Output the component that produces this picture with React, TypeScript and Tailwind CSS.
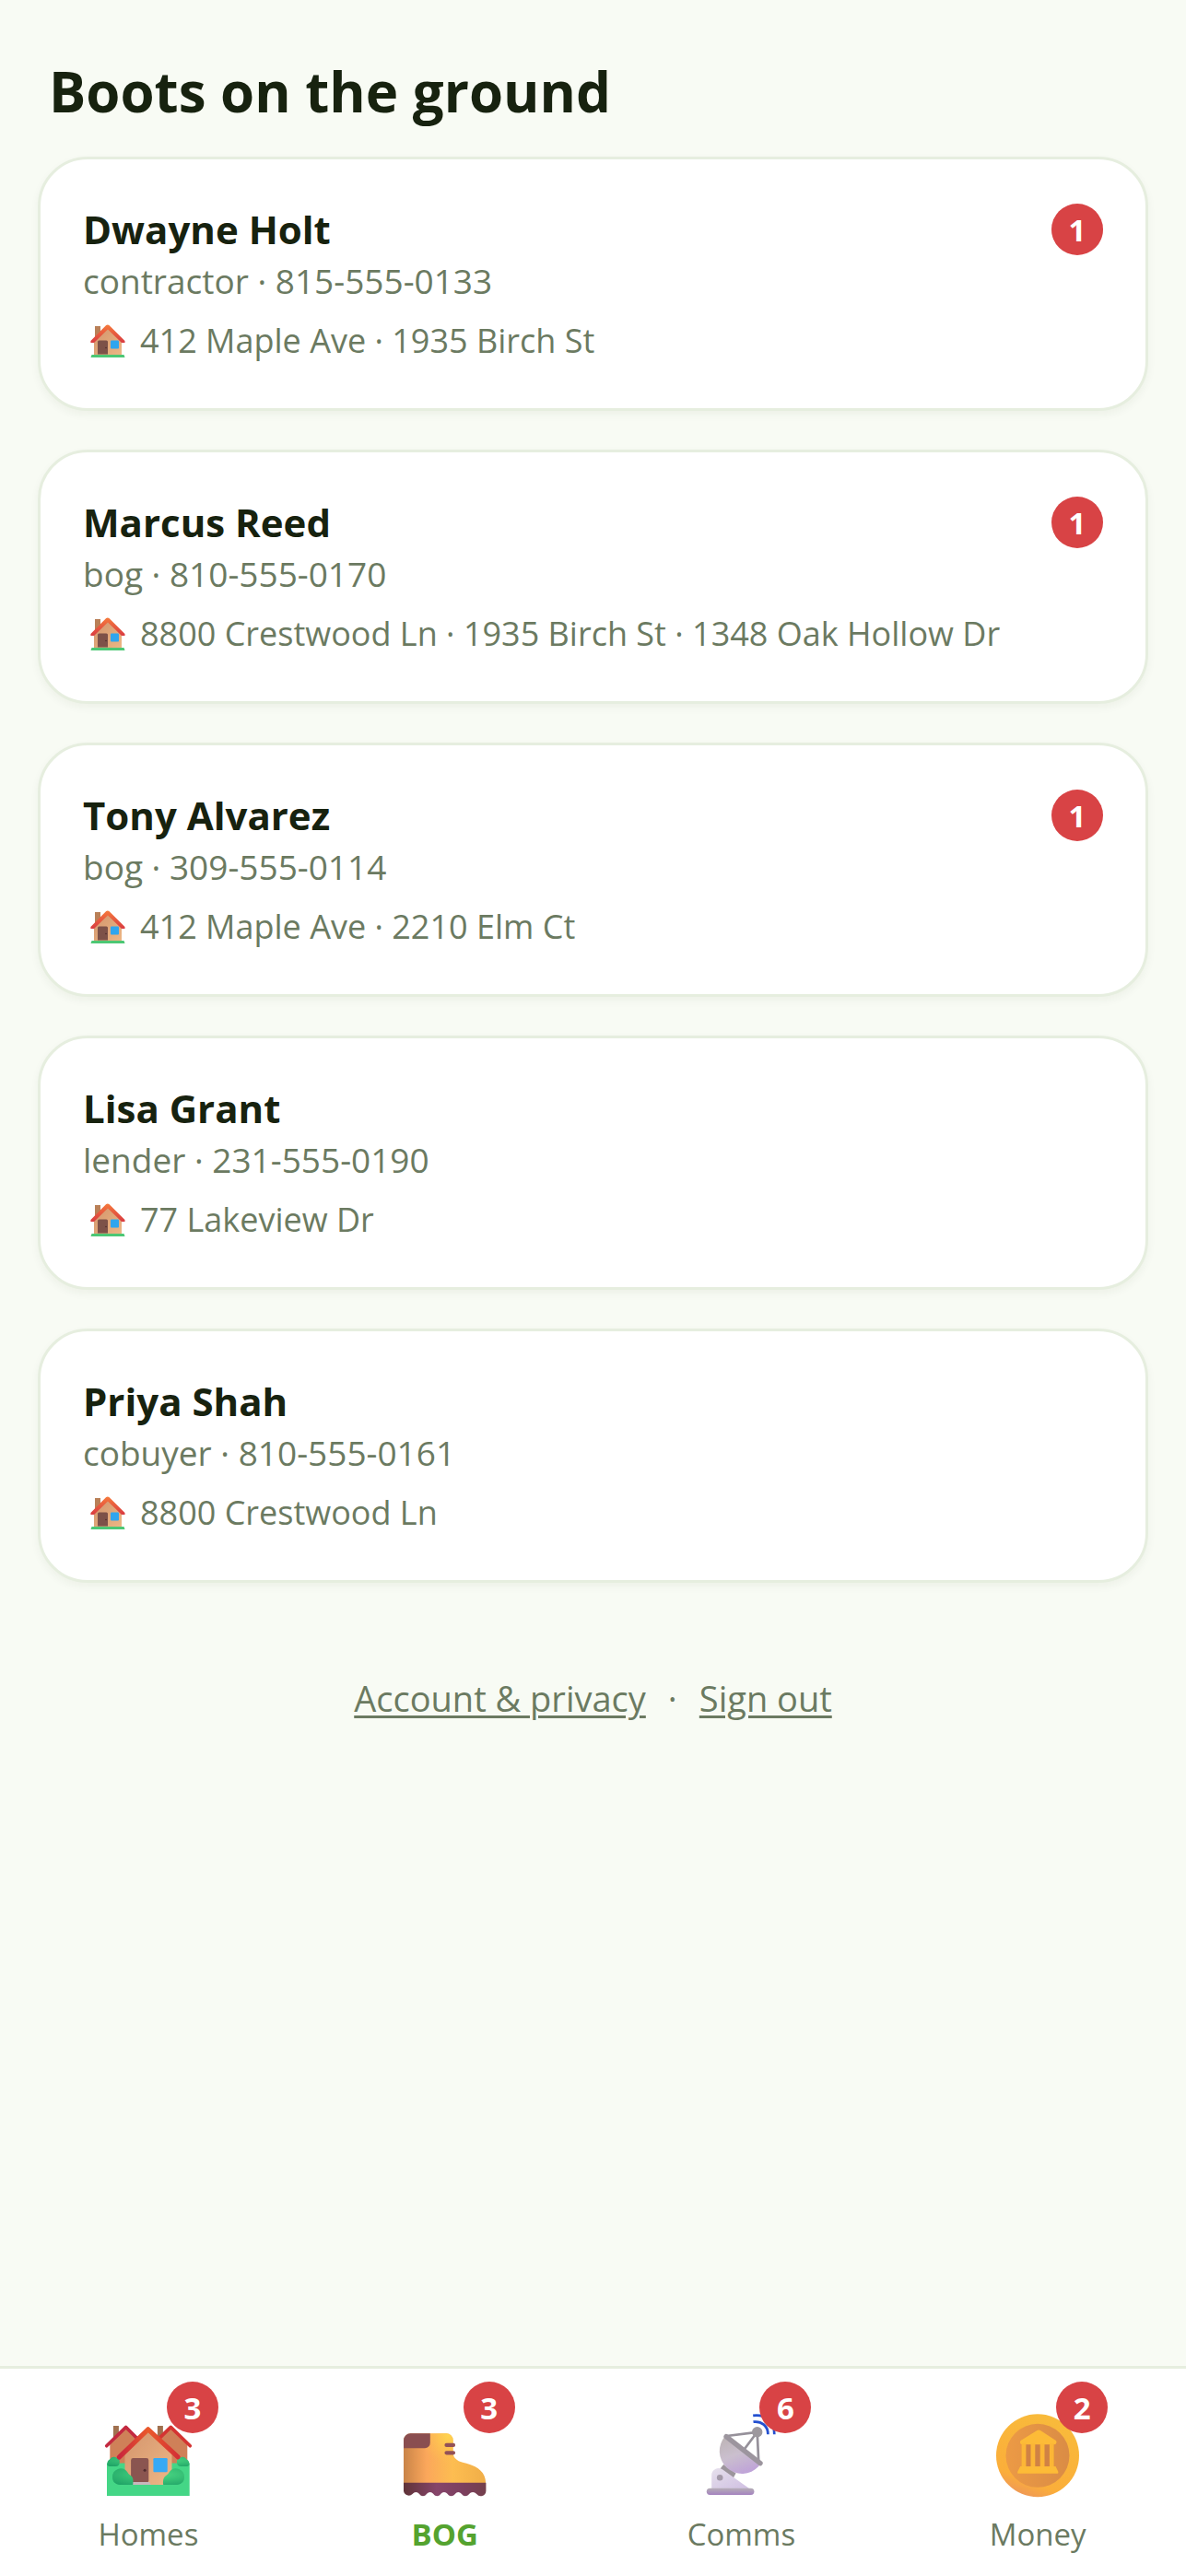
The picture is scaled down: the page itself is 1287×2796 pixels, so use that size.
type Contact = {
  name: string;
  role: string;
  phone: string;
  homes: string[];
  unread: number;
};

const contacts: Contact[] = [
  { name: 'Dwayne Holt', role: 'contractor', phone: '815-555-0133', homes: ['412 Maple Ave', '1935 Birch St'], unread: 1 },
  { name: 'Marcus Reed', role: 'bog', phone: '810-555-0170', homes: ['8800 Crestwood Ln', '1935 Birch St', '1348 Oak Hollow Dr'], unread: 1 },
  { name: 'Tony Alvarez', role: 'bog', phone: '309-555-0114', homes: ['412 Maple Ave', '2210 Elm Ct'], unread: 1 },
  { name: 'Lisa Grant', role: 'lender', phone: '231-555-0190', homes: ['77 Lakeview Dr'], unread: 0 },
  { name: 'Priya Shah', role: 'cobuyer', phone: '810-555-0161', homes: ['8800 Crestwood Ln'], unread: 0 },
];

const HouseIcon = () => (
  <svg viewBox="0 0 38 36" className="w-[38px] h-9 shrink-0" aria-hidden="true">
    <defs>
      <linearGradient id="house-wall" x1="0" y1="0" x2="1" y2="1">
        <stop offset="0" stopColor="#d1946c" />
        <stop offset="1" stopColor="#edb684" />
      </linearGradient>
      <linearGradient id="house-roof" x1="0" y1="0" x2="0" y2="1">
        <stop offset="0" stopColor="#f57a3c" />
        <stop offset="1" stopColor="#d93b41" />
      </linearGradient>
    </defs>
    <path d="M5 2h6v14H5z" fill="#b98058" />
    <path d="M4 17 19 3l15 14v16H4z" fill="url(#house-wall)" />
    <path d="M17.2 1.1a2.4 2.4 0 0 1 3.2 0L37.5 18v2H34L19 5.600 4 20H.4v-2z" fill="url(#house-roof)" />
    <path d="M8 19a1.500 1.500 0 0 1 1.500-1.500h8A1.500 1.500 0 0 1 19 19v13.500H8z" fill="#7d5148" />
    <circle cx="17" cy="25.500" r=".8" fill="#4c2b2b" />
    <rect x="22" y="17.500" width="9" height="9" rx="1" fill="#2fa5ee" />
    <path d="M1.500 33h35l1 3H.5z" fill="#4cc774" />
  </svg>
);

const HomesIcon = () => (
  <svg viewBox="0 0 32 32" className="size-24" aria-hidden="true">
    <defs>
      <linearGradient id="homes-wall" x1="0" y1="0" x2="1" y2="1">
        <stop offset="0" stopColor="#d3946c" />
        <stop offset="1" stopColor="#eeb786" />
      </linearGradient>
      <linearGradient id="homes-roof" x1="0" y1="0" x2="1" y2="0">
        <stop offset="0" stopColor="#c9253c" />
        <stop offset=".5" stopColor="#ea5a2b" />
        <stop offset="1" stopColor="#d42f35" />
      </linearGradient>
      <radialGradient id="homes-bush" cx=".6" cy=".35" r=".8">
        <stop offset="0" stopColor="#4fdd86" />
        <stop offset="1" stopColor="#1fa366" />
      </radialGradient>
    </defs>
    <path d="M3.300 5.300h2V11h-2zM19.300 5.300h2V11h-2z" fill="#a0714f" />
    <path d="M2.100 11.500 7.900 6l6 6v8H2.100zM30.100 11.500 24.100 6l-6 6v8h12z" fill="#cf8058" />
    <path d="M.9 12.600 7.900 5.800l5 5" fill="none" stroke="#c32940" strokeWidth="1.200" strokeLinecap="round" strokeLinejoin="round" />
    <path d="m19.500 10.300 4.600-4.500 7 6.800" fill="none" stroke="#d43432" strokeWidth="1.200" strokeLinecap="round" strokeLinejoin="round" />
    <path d="M1 18.800h29.900v11.900H1z" fill="#44d686" />
    <path d="M1.100 19.300a2 2 0 0 1 1-1.900 1.700 1.700 0 0 1 2.700-.3c.7.200.8.800.8 1.200 0 1.100-.5 1.700-1.400 1.700H2.300c-.7 0-1.200-.3-1.200-.7zM30.800 19.300a2 2 0 0 0-1-1.900 1.700 1.700 0 0 0-2.700-.3c-.7.200-.8.800-.8 1.200 0 1.100.5 1.700 1.400 1.700h1.900c.7 0 1.200-.3 1.200-.7z" fill="url(#homes-bush)" />
    <path d="M7.500 15 15.900 7l8.600 8v11.700h-17z" fill="url(#homes-wall)" />
    <path d="M5.400 16.700 15.900 6.600l10.800 10" fill="none" stroke="url(#homes-roof)" strokeWidth="1.700" strokeLinecap="round" strokeLinejoin="round" />
    <rect x="9.700" y="17" width="6.400" height="9" rx=".8" fill="#8a5550" />
    <circle cx="14.700" cy="21.400" r=".5" fill="#4f2b2e" />
    <path d="M9.300 25.700h7.100l.5 1H9z" fill="#c9b7bd" />
    <rect x="17.800" y="17" width="5.100" height="5.100" rx=".4" fill="#37a9f4" />
    <path d="M3 23.900a3 3 0 0 1 5.300-2c.4.700.7 1 1.300 1.400 1 .6 1 1.900.8 3.400H6.500C4.300 26.700 3 25.800 3 23.900zM29 23.900a3 3 0 0 0-5.300-2c-.4.700-.7 1-1.300 1.400-1 .6-1.200 1.900-1 3.400h4.100c2.200 0 3.500-.9 3.500-2.800z" fill="url(#homes-bush)" />
  </svg>
);

const BootIcon = () => (
  <svg viewBox="0 0 32 32" className="size-24" aria-hidden="true">
    <defs>
      <linearGradient id="boot-leather" x1="0" y1="0" x2="1" y2="0">
        <stop offset="0" stopColor="#c98448" />
        <stop offset=".28" stopColor="#fba75b" />
        <stop offset=".6" stopColor="#fdbd51" />
        <stop offset="1" stopColor="#f0ae48" />
      </linearGradient>
      <radialGradient id="boot-shine" cx="17" cy="9" r="10" gradientUnits="userSpaceOnUse">
        <stop offset="0" stopColor="#ffd34f" />
        <stop offset="1" stopColor="#ffc04f" stopOpacity="0" />
      </radialGradient>
      <linearGradient id="boot-sole" x1="0" y1="0" x2="1" y2="0">
        <stop offset="0" stopColor="#5f3338" />
        <stop offset=".4" stopColor="#86456a" />
        <stop offset=".7" stopColor="#7d4060" />
        <stop offset="1" stopColor="#74404c" />
      </linearGradient>
    </defs>
    <path d="M1 10.600a2.500 2.500 0 0 1 2.500-2.500h13a2.400 2.400 0 0 1 2.400 2.400v4.700c0 1.600 1.300 2.900 3.500 3.400 4.500 1 8.300 3 8.300 7.400H1z" fill="url(#boot-leather)" />
    <path d="M1 10.600a2.500 2.500 0 0 1 2.500-2.500h13a2.400 2.400 0 0 1 2.400 2.400v4.700c0 1.600 1.300 2.900 3.500 3.400 4.500 1 8.300 3 8.300 7.400H1z" fill="url(#boot-shine)" />
    <path d="M1 10.600a2.500 2.500 0 0 1 2.500-2.500h7.100v3.400a1.900 1.900 0 0 1-1.900 1.900H1z" fill="#8a4e50" />
    <path d="M16.500 12.300h2.500M16.500 15.100h2.500" stroke="#925158" strokeWidth="1.400" strokeLinecap="round" />
    <path d="M1 25.900h29.800v3a1.900 1.900 0 0 1-3.400 1.100c-.8-.9-2-.9-2.700 0-.8 1-2 1-2.700 0-.8-.9-1.700-.9-2.400 0-.8 1-2 1-2.700 0-.7-.9-1.800-.9-2.500 0-.7 1-1.900 1-2.600 0-.7-.9-1.700-.9-2.500 0-.7 1-1.900 1-2.600 0-.7-.9-1.800-.9-2.500 0A1.900 1.900 0 0 1 1 28.900z" fill="url(#boot-sole)" />
  </svg>
);

const DishIcon = () => (
  <svg viewBox="0 0 32 32" className="size-24" aria-hidden="true">
    <defs>
      <linearGradient id="dish-bowl" x1=".2" y1="0" x2=".6" y2="1">
        <stop offset="0" stopColor="#bdb4b6" />
        <stop offset=".5" stopColor="#cabfce" />
        <stop offset="1" stopColor="#bfa3d8" />
      </linearGradient>
      <linearGradient id="dish-stand" x1="0" y1="0" x2="1" y2="1">
        <stop offset="0" stopColor="#e6e0ec" />
        <stop offset="1" stopColor="#cfbfe2" />
      </linearGradient>
      <linearGradient id="dish-foot" x1="0" y1="0" x2="0" y2="1">
        <stop offset="0" stopColor="#b5aeb6" />
        <stop offset="1" stopColor="#a583c0" />
      </linearGradient>
    </defs>
    <path d="M20.500 3.900c3-.4 5.300 1.500 5.300 4.500M20.400 1.600c4.500-.6 7.700 2.200 7.700 6.800" fill="none" stroke="#2450d0" strokeWidth=".9" />
    <path d="m9.700 19.300 4.500 3.200-1.200 2.200-5-3.200z" fill="#9c959c" />
    <path d="M5.400 28v-4.800a2.500 2.500 0 0 1 3.900-2.100L19 28z" fill="url(#dish-stand)" />
    <circle cx="8.400" cy="24.100" r="1.100" fill="#a49aa9" />
    <rect x="3.600" y="27.900" width="17.200" height="2.400" rx="1.200" fill="url(#dish-foot)" />
    <path d="M10.400 9a8.100 8.100 0 0 0 12 11l.7-1z" fill="url(#dish-bowl)" />
    <path d="m21.900 7.600-11 1.400M21.900 7.600l-4.500 6M21.900 7.600l.5 10.600" stroke="#96919a" strokeWidth=".9" />
    <path d="M10.700 9.200 23 18.900" stroke="#9c959e" strokeWidth="1.800" strokeLinecap="round" />
    <circle cx="21.900" cy="7.600" r="1.900" fill="#9d989e" />
  </svg>
);

const CoinIcon = () => (
  <svg viewBox="0 0 32 32" className="size-24" aria-hidden="true">
    <defs>
      <linearGradient id="coin-rim" x1=".7" y1="0" x2=".3" y2="1">
        <stop offset="0" stopColor="#f8bb3b" />
        <stop offset=".8" stopColor="#fbae3a" />
        <stop offset="1" stopColor="#ee965a" />
      </linearGradient>
      <linearGradient id="coin-face" x1="0" y1="0" x2="1" y2="0">
        <stop offset="0" stopColor="#ec9a45" />
        <stop offset="1" stopColor="#da8c45" />
      </linearGradient>
    </defs>
    <circle cx="16" cy="16.100" r="15" fill="url(#coin-rim)" />
    <circle cx="16" cy="16.100" r="11.500" fill="url(#coin-face)" />
    <path d="M11 11.500h11v9H11z" fill="#d08244" />
    <path d="M15.800 7a1.100 1.100 0 0 1 1.200 0l5.500 3.600c.6.400.3 1.500-.4 1.500H10.400c-.7 0-1-1.100-.4-1.500z" fill="#fdbb37" />
    <path d="M10.200 11.800h1.600v8.400h-1.600zM13.500 11.800h1.600v8.400h-1.600zM16.900 11.800h1.600v8.400h-1.600zM20.300 11.800h1.600v8.400h-1.600z" fill="#fcb636" />
    <path d="M9.700 20h12.800l.9 1.800c.2.500 0 .8-.4.800H9.200c-.5 0-.6-.4-.4-.8z" fill="#fdbb37" />
  </svg>
);

const Badge = ({ count }: { count: number }) => (
  <span className="flex items-center justify-center min-w-14 h-14 rounded-full bg-[#d84345] text-white text-[33px] leading-none font-bold">
    {count}
  </span>
);

const tabs = [
  { label: 'Homes', href: '#homes', icon: HomesIcon, count: 3 },
  { label: 'BOG', href: '#bog', icon: BootIcon, count: 3 },
  { label: 'Comms', href: '#comms', icon: DishIcon, count: 6 },
  { label: 'Money', href: '#money', icon: CoinIcon, count: 2 },
];

const ContactCard = ({ contact }: { contact: Contact }) => (
  <li className="bg-white rounded-[54px] border-[3px] border-[#e6eedf] px-[46px] pt-11 pb-11 shadow-[0_4px_10px_rgba(30,60,20,0.05)]">
    <div className="flex items-center justify-between h-16">
      <h2 className="text-[42px] leading-[64px] font-bold">{contact.name}</h2>
      {contact.unread > 0 && <Badge count={contact.unread} />}
    </div>
    <p className="text-[37px] leading-[48px] text-[#6b7a61]">
      {contact.role} · {contact.phone}
    </p>
    <p className="mt-3 pl-2 flex items-center gap-4 text-[36px] leading-[58px] text-[#6b7a61]">
      <HouseIcon />
      {contact.homes.join(' · ')}
    </p>
  </li>
);

export default function App() {
  return (
    <div className="min-h-screen flex flex-col bg-[#f8fbf4] text-[#17220f] font-['Open_Sans','Noto_Sans',sans-serif]">
      <main className="flex-1 px-[41px] pt-[54px]">
        <h1 className="px-3 mb-[26px] text-[60px] leading-[90px] font-bold">Boots on the ground</h1>
        <ul className="flex flex-col gap-[42px]">
          {contacts.map((contact) => (
            <ContactCard key={contact.name} contact={contact} />
          ))}
        </ul>
        <div className="mt-24 flex justify-center gap-6 text-[38px] leading-[58px] text-[#6b7a61]">
          <a href="#account" className="underline decoration-[3px] underline-offset-4">Account &amp; privacy</a>
          <span>·</span>
          <a href="#signout" className="underline decoration-[3px] underline-offset-4">Sign out</a>
        </div>
      </main>

      <nav className="sticky bottom-0 grid grid-cols-4 bg-white border-t-[3px] border-[#e6eedf] pt-[46px] pb-5">
        {tabs.map((tab) => {
          const Icon = tab.icon;
          const active = tab.label === 'BOG';

          return (
            <a
              key={tab.label}
              href={tab.href}
              aria-current={active ? 'page' : undefined}
              className={`flex flex-col items-center gap-3 text-[33px] leading-[51px] ${active ? 'font-bold text-[#54a32f]' : 'text-[#6b7a61]'}`}
            >
              <span className="relative">
                <Icon />
                <span className="absolute -top-8 left-[68px]">
                  <Badge count={tab.count} />
                </span>
              </span>
              {tab.label}
            </a>
          );
        })}
      </nav>
    </div>
  );
}
